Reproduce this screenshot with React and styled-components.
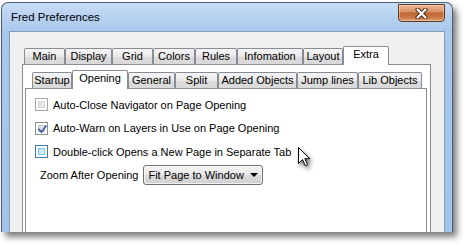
import React from "react";
import styled, { createGlobalStyle } from "styled-components";

const Global = createGlobalStyle`
  html, body { margin: 0; padding: 0; background: #fff; }
  body { font-family: "Liberation Sans", Arial, sans-serif; font-size: 11px; color: #000; }
  * { box-sizing: border-box; }
`;

const Stage = styled.div`
  position: relative;
  width: 467px;
  height: 246px;
  overflow: hidden;
  background: #fff;
  padding: 2px 0 0 1px;
`;

const Window = styled.div`
  width: 452px;
  height: 230px;
  border: 1px solid #4d5d72;
  border-bottom: none;
  border-radius: 7px 7px 0 0;
  background: linear-gradient(#c6dcf4, #a8c8ec 28px, #a2c4ea);
  box-shadow: 4px 5px 6px rgba(0, 0, 0, 0.5);
  display: flex;
  flex-direction: column;
  padding: 0 7px;
  overflow: hidden;
`;

const TitleBar = styled.div`
  height: 28px;
  flex: none;
  display: flex;
  align-items: flex-start;
  justify-content: space-between;
`;

const Title = styled.div`
  margin: 7px 0 0 2px;
  line-height: 14px;
  font-size: 11.5px;
  color: #000;
`;

const CloseButton = styled.div`
  margin-top: 1px;
  width: 47px;
  height: 18px;
  border: 1px solid #5c3823;
  border-radius: 0 0 4px 4px;
  background: linear-gradient(#eab690, #dc966a 40%, #c06634 50%, #c97542 75%, #dc9b70);
  box-shadow: inset 0 0 0 1px rgba(255, 230, 210, 0.45);
  display: flex;
  align-items: center;
  justify-content: center;
`;

const Client = styled.div`
  flex: 1;
  background: #f0f0f0;
  border: 1px solid #8b9bb0;
  border-bottom: none;
  padding: 14px 0 0 12px;
  display: flex;
  flex-direction: column;
`;

const TabControl = styled.div`
  width: ${(p) => p.$w}px;
  flex: 1;
  display: flex;
  flex-direction: column;
`;

const TabRow = styled.div`
  height: 18px;
  flex: none;
  display: flex;
  align-items: flex-end;
  padding-left: ${(p) => p.$indent}px;
  position: relative;
  z-index: 1;
`;

const Tab = styled.div`
  width: ${(p) => p.$w}px;
  height: ${(p) => (p.$active ? 19 : 16)}px;
  margin-bottom: ${(p) => (p.$active ? -1 : 0)}px;
  border: 1px solid #898c95;
  border-bottom: none;
  border-radius: 2px 2px 0 0;
  background: ${(p) => (p.$active ? "#fff" : "linear-gradient(#f5f5f5, #e9e9e9 50%, #dcdcdc 52%, #d9d9d9)")};
  text-align: center;
  line-height: 14px;
  white-space: nowrap;
  color: #000;
`;

const Page = styled.div`
  flex: 1;
  background: #fff;
  border: 1px solid #898c95;
  border-bottom: none;
  display: flex;
  flex-direction: column;
  padding: ${(p) => p.$pad};
`;

const Content = styled.div`
  padding: 4px 0 0 9px;
  display: flex;
  flex-direction: column;
`;

const CheckRow = styled.label`
  height: 23.5px;
  display: flex;
  align-items: center;
  gap: 5px;
  white-space: nowrap;
`;

const Box = styled.span`
  position: relative;
  width: 13px;
  height: 13px;
  flex: none;
  border: 1px solid ${(p) => (p.$state === "disabled" ? "#a6a6a6" : p.$state === "hover" ? "#3c7fb1" : "#8e8f8f")};
  background: #fff;
  padding: 2px;
  display: flex;
  &::before {
    content: "";
    flex: 1;
    border: 1px solid ${(p) => (p.$state === "disabled" ? "#d6d6d6" : p.$state === "hover" ? "#79c6f9" : "#c6c8cb")};
    background: ${(p) =>
      p.$state === "disabled"
        ? "linear-gradient(135deg, #dcdcdc, #f0f0f0)"
        : p.$state === "hover"
        ? "linear-gradient(135deg, #b1dffd, #e9f7fe)"
        : "linear-gradient(135deg, #d0d3d7, #f6f6f6)"};
  }
`;

const Check = styled.svg`
  position: absolute;
  left: 1px;
  top: 1px;
`;

const ZoomRow = styled.div`
  height: 22px;
  display: flex;
  align-items: center;
  gap: 5px;
  padding-left: 5px;
  white-space: nowrap;
`;

const Select = styled.div`
  width: 120px;
  height: 20px;
  border: 1px solid #707070;
  border-radius: 3px;
  background: linear-gradient(#f2f2f2, #ebebeb 50%, #dddddd 51%, #cfcfcf);
  box-shadow: inset 0 0 0 1px rgba(255, 255, 255, 0.7);
  display: flex;
  align-items: center;
  justify-content: space-between;
  padding: 0 4px 0 4px;
`;

const Cursor = styled.svg`
  position: absolute;
  left: 298px;
  top: 147px;
  filter: drop-shadow(2px 3px 2px rgba(0, 0, 0, 0.55));
`;

const outerTabs = [
  ["Main", 41],
  ["Display", 47],
  ["Grid", 41],
  ["Colors", 42],
  ["Rules", 42],
  ["Infomation", 66],
  ["Layout", 40],
  ["Extra", 46, true],
];

const innerTabs = [
  ["Startup", 40],
  ["Opening", 56, true],
  ["General", 47],
  ["Split", 43],
  ["Added Objects", 79],
  ["Jump lines", 61],
  ["Lib Objects", 64],
];

function Checkbox({ state, checked }) {
  return (
    <Box $state={state}>
      {checked && (
        <Check width="11" height="11" viewBox="0 0 11 11">
          <path d="M2.2 5.6 L4.4 8 L8.8 2.2" fill="none" stroke="#3f5ea0" strokeWidth="1.8" strokeLinecap="square" />
        </Check>
      )}
    </Box>
  );
}

export default function App() {
  return (
    <>
      <Global />
      <Stage>
        <Window>
          <TitleBar>
            <Title>Fred Preferences</Title>
            <CloseButton>
              <svg width="13" height="11" viewBox="0 0 13 11">
                <path d="M2.5 1.5 L10.5 9.5 M10.5 1.5 L2.5 9.5" stroke="#4a2a18" strokeWidth="4.2" strokeLinecap="round" />
                <path d="M2.5 1.5 L10.5 9.5 M10.5 1.5 L2.5 9.5" stroke="#fff" strokeWidth="2.2" strokeLinecap="round" />
              </svg>
            </CloseButton>
          </TitleBar>
          <Client>
            <TabControl $w={409}>
              <TabRow $indent={2}>
                {outerTabs.map(([t, w, a]) => (
                  <Tab key={t} $w={w} $active={a}>
                    {t}
                  </Tab>
                ))}
              </TabRow>
              <Page $pad="5px 3px 0 2px">
                <TabControl $w={402}>
                  <TabRow $indent={7}>
                    {innerTabs.map(([t, w, a]) => (
                      <Tab key={t} $w={w} $active={a}>
                        {t}
                      </Tab>
                    ))}
                  </TabRow>
                  <Page $pad="0">
                    <Content>
                      <CheckRow>
                        <Checkbox state="disabled" />
                        <span>Auto-Close Navigator on Page Opening</span>
                      </CheckRow>
                      <CheckRow>
                        <Checkbox state="normal" checked />
                        <span>Auto-Warn on Layers in Use on Page Opening</span>
                      </CheckRow>
                      <CheckRow>
                        <Checkbox state="hover" />
                        <span>Double-click Opens a New Page in Separate Tab</span>
                      </CheckRow>
                      <ZoomRow>
                        <span>Zoom After Opening</span>
                        <Select>
                          <span>Fit Page to Window</span>
                          <svg width="8" height="4" viewBox="0 0 8 4">
                            <path d="M0 0 H8 L4 4 Z" fill="#000" />
                          </svg>
                        </Select>
                      </ZoomRow>
                    </Content>
                  </Page>
                </TabControl>
              </Page>
            </TabControl>
          </Client>
        </Window>
        <Cursor width="13" height="20" viewBox="0 0 13 20">
          <path d="M0.5 0.5 L0.5 16.5 L4.5 12.6 L7.3 18.8 L9.6 17.8 L6.9 11.7 L11.8 11.7 Z" fill="#fff" stroke="#000" strokeWidth="1" strokeLinejoin="miter" />
        </Cursor>
      </Stage>
    </>
  );
}
